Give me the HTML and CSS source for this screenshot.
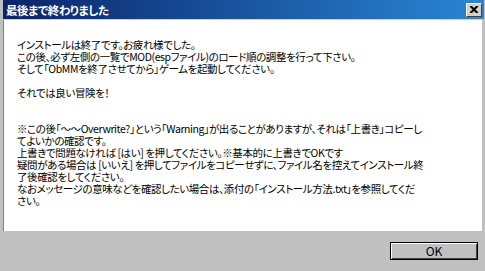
FILE: index.html
```html
<!DOCTYPE html>
<html lang="ja">
<head>
    <meta charset="UTF-8">
    <title>最後まで終わりました</title>
    <link rel="stylesheet" href="styles.css">
</head>
<body>
    <div class="window">
        <div class="titlebar">
            <span class="title">最後まで終わりました</span>
            <span class="close">
                <svg width="8" height="7" viewBox="0 0 8 7">
                    <path d="M0 0h2l2 2 2-2h2v1l-2.5 2.5L8 6v1H6L4 5 2 7H0V6l2.5-2.5L0 1z" fill="#000"/>
                </svg>
            </span>
        </div>
        <div class="content">
            <p class="para">インストールは終了です。お疲れ様でした。<br>この後、必ず左側の一覧でMOD(espファイル)のロード順の調整を行って下さい。<br>そして「ObMMを終了させてから」ゲームを起動してください。</p>
            <p class="para gap">それでは良い冒険を！</p>
            <p class="para">※この後「～～Overwrite?」という「Warning」が出ることがありますが、それは「上書き」コピーし<br>てよいかの確認です。<br>上書きで問題なければ [はい] を押してください。※基本的に上書きでOKです<br>疑問がある場合は [いいえ] を押してファイルをコピーせずに、ファイル名を控えてインストール終<br>了後確認をしてください。<br>なおメッセージの意味などを確認したい場合は、添付の「インストール方法.txt」を参照してくだ<br>さい。</p>
        </div>
        <div class="footer">
            <button class="btn">OK</button>
        </div>
    </div>
</body>
</html>
```

FILE: styles.css
```css
body {
    margin: 0;
    background: #c0c0c0;
    font-family: "Noto Sans CJK JP", "Noto Sans", sans-serif;
    font-feature-settings: "palt";
}
.window {
    width: 479px;
    height: 271px;
    display: flex;
    flex-direction: column;
    border-left: 3px solid #c0c0c0;
    border-right: 3px solid #c0c0c0;
    background: #c0c0c0;
}
.titlebar {
    height: 19px;
    display: flex;
    align-items: center;
    justify-content: space-between;
    padding: 0 0 0 3px;
    margin-right: -2px;
    background: linear-gradient(to right, #0a246a, #2a86d4);
    border-bottom: 1px solid #d4d0c8;
}
.title {
    color: #fff;
    font-weight: bold;
    font-size: 11.5px;
    letter-spacing: -0.5px;
    white-space: nowrap;
}
.close {
    flex-shrink: 0;
    width: 16px;
    height: 14px;
    margin-right: 2px;
    box-sizing: border-box;
    display: flex;
    align-items: center;
    justify-content: center;
    background: #d4d0c8;
    border: 1px solid;
    border-color: #fff #404040 #404040 #fff;
}
.content {
    height: 211px;
    flex-shrink: 0;
    box-sizing: border-box;
    background: #fff;
    border-left: 1px solid #808080;
    padding: 19px 0 0 13px;
    font-size: 10.5px;
    letter-spacing: -0.4px;
    line-height: 12px;
    color: #000;
    white-space: nowrap;
    overflow: hidden;
}
.para {
    margin: 0 0 12px;
}
.gap {
    margin-bottom: 24px;
}
.footer {
    flex: 1;
    display: flex;
    justify-content: flex-end;
    align-items: flex-start;
    padding: 11px 4px 0 0;
}
.btn {
    width: 88px;
    height: 18px;
    padding: 0;
    background: #c0c0c0;
    border: 1px solid #000;
    box-shadow: inset 1px 1px 0 #fff, inset -1px -1px 0 #404040;
    font-family: "Noto Sans CJK JP", sans-serif;
    font-size: 12px;
    line-height: 14px;
    color: #000;
}
```
